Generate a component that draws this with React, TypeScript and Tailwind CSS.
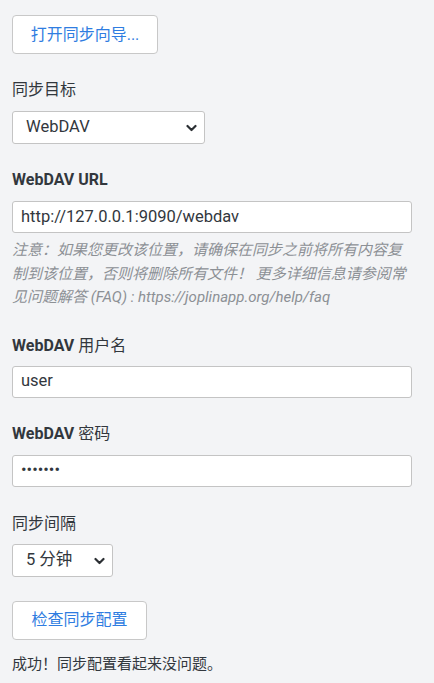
const font = { fontFamily: 'Roboto, "Noto Sans CJK SC", sans-serif' };

function Chevron() {
  return (
    <svg className="absolute right-[7px] top-[11px]" width="11" height="10" viewBox="0 0 11 10" fill="none">
      <polyline points="1.5,3 5.5,7 9.5,3" stroke="#2b2f33" strokeWidth="2.2" strokeLinecap="round" strokeLinejoin="round" />
    </svg>
  );
}

function Select({ value, width }: { value: string; width: string }) {
  return (
    <div className={`relative ${width} h-[33px] rounded-[3px] border border-[#c4c4c4] bg-white`}>
      <div className="flex h-full items-center pl-[13px] text-[16.5px] text-[#32373d]">{value}</div>
      <Chevron />
    </div>
  );
}

function Field({ value }: { value: string }) {
  return (
    <div className="flex h-[32px] w-[400px] items-center rounded-[3px] border border-[#c4c4c4] bg-white pl-[8px] text-[16.5px] text-[#32373d]">
      {value}
    </div>
  );
}

export default function App() {
  return (
    <div className="min-h-[683px] w-[434px] bg-[#f3f4f6] px-[12px] pt-[15px] text-[#32373d]" style={font}>
      <button className="h-[39px] w-[146px] rounded-[4px] border border-[#c8c8c8] bg-white text-[16px] text-[#2f7de1]">
        打开同步向导...
      </button>

      <div className="mt-[26px] text-[16px] leading-[20px]">同步目标</div>
      <div className="mt-[11px]">
        <Select value="WebDAV" width="w-[193px]" />
      </div>

      <div className="mt-[26px] text-[16px] font-bold leading-[20px]">WebDAV URL</div>
      <div className="mt-[11px]">
        <Field value="http://127.0.0.1:9090/webdav" />
      </div>
      <p className="mt-[6px] w-[400px] text-[15px] italic leading-[23.5px] text-[#8c9095]">
        注意：如果您更改该位置，请确保在同步之前将所有内容复制到该位置，否则将删除所有文件！ 更多详细信息请参阅常见问题解答 (FAQ) : https://joplinapp.org/help/faq
      </p>

      <div className="mt-[26px] text-[16px] leading-[20px]">
        <span className="font-bold">WebDAV</span> 用户名
      </div>
      <div className="mt-[10px]">
        <Field value="user" />
      </div>

      <div className="mt-[26px] text-[16px] leading-[20px]">
        <span className="font-bold">WebDAV</span> 密码
      </div>
      <div className="mt-[11px]">
        <Field value="•••••••" />
      </div>

      <div className="mt-[27px] text-[16px] leading-[20px]">同步间隔</div>
      <div className="mt-[10px]">
        <Select value="5 分钟" width="w-[101px]" />
      </div>

      <button className="mt-[24px] h-[39px] w-[135px] rounded-[4px] border border-[#c8c8c8] bg-white text-[16px] text-[#2f7de1]">
        检查同步配置
      </button>

      <div className="mt-[14px] text-[15px] leading-[20px]">成功！同步配置看起来没问题。</div>
    </div>
  );
}
